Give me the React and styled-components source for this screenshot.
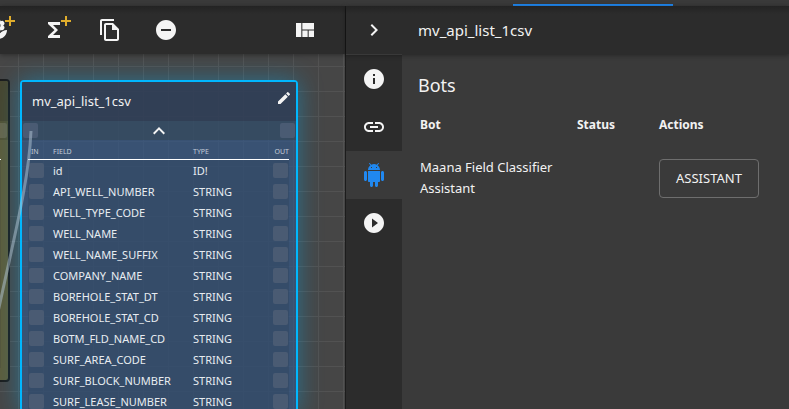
import React from "react";
import styled, { createGlobalStyle } from "styled-components";
import {
  MdInfo,
  MdLink,
  MdPlayCircleFilled,
  MdRemoveCircle,
  MdOutlineFileCopy,
  MdViewQuilt,
  MdChevronRight,
  MdEdit,
  MdExpandLess,
  MdFunctions,
} from "react-icons/md";

const GlobalStyle = createGlobalStyle`
  *, *::before, *::after { box-sizing: border-box; }
  body {
    margin: 0;
    background: #3a3a3a;
    color: #f2f2f2;
    font-family: "Noto Sans", "Open Sans", sans-serif;
    font-size: 14px;
  }
  button, table { font: inherit; color: inherit; }
  button { cursor: pointer; }
`;

const Page = styled.div`
  display: flex;
  flex-direction: column;
  height: 100vh;
  overflow: hidden;
`;

const TabStrip = styled.div`
  display: flex;
  flex: none;
  align-items: flex-end;
  justify-content: flex-end;
  height: 6px;
  padding-right: 116px;
  background: #3a3a3a;
`;

const ActiveTab = styled.div`
  width: 160px;
  height: 2px;
  background: #2088f0;
`;

const Workspace = styled.div`
  display: flex;
  flex: 1;
  min-height: 0;
`;

const Editor = styled.main`
  display: flex;
  flex-direction: column;
  flex: 1;
  min-width: 0;
`;

const Bar = styled.header`
  position: relative;
  z-index: 2;
  display: flex;
  flex: none;
  align-items: center;
  height: 48px;
  background: linear-gradient(#232323, #2c2c2c 8px);
  box-shadow: 0 1px 5px rgba(0, 0, 0, 0.4);
`;

const Toolbar = styled(Bar)`
  justify-content: space-between;
  padding-right: 28px;
`;

const ToolGroup = styled.div`
  display: flex;
  gap: 32px;
  margin-left: -14px;
`;

const IconButton = styled.button`
  position: relative;
  display: flex;
  align-items: center;
  justify-content: center;
  width: 24px;
  height: 24px;
  padding: 0;
  border: 0;
  background: none;
  color: #f4f4f4;
`;

const PlusBadge = styled.svg`
  position: absolute;
  top: -2px;
  right: -5px;
  width: 10px;
  height: 10px;
  stroke: #e0ad2c;
  stroke-width: 2;
`;

const Canvas = styled.section`
  position: relative;
  flex: 1;
  overflow: hidden;
  background-color: #464646;
  background-image:
    linear-gradient(#525252 1px, transparent 1px),
    linear-gradient(90deg, #525252 1px, transparent 1px);
  background-size: 25px 25px;
  background-position: 18px 12px;
`;

const Node = styled.article`
  position: absolute;
  left: 20px;
  top: 26px;
  width: 278px;
  border: 2px solid #00b7ff;
  border-radius: 4px;
  background: rgba(48, 90, 145, 0.6);
  box-shadow: 0 0 24px rgba(0, 183, 255, 0.4);
`;

const NodeHeader = styled.div`
  display: flex;
  justify-content: space-between;
  height: 39px;
  padding: 4px 0 0 10px;
  background: rgba(45, 52, 66, 0.62);
`;

const NodeTitle = styled.h2`
  margin: 0;
  font-size: 13px;
  font-weight: 400;
  line-height: 30px;
`;

const NodePorts = styled.div`
  display: flex;
  align-items: center;
  justify-content: space-between;
  height: 19px;
  padding: 0 1px;
  background: rgba(51, 67, 80, 0.5);
`;

const Port = styled.span`
  display: block;
  width: 15px;
  height: 15px;
  border-radius: 2px;
  background: #4a5b73;
`;

const FieldTable = styled.table`
  width: calc(100% - 13px);
  margin-left: 6px;
  border-collapse: separate;
  border-spacing: 0;
  table-layout: fixed;
  font-size: 11px;
  line-height: 21px;
  text-align: left;

  thead th {
    height: 20px;
    padding: 4px 0 0;
    border-bottom: 1px solid #fff;
    font-size: 7px;
    font-weight: 400;
    line-height: 15px;
    color: #c3ccd8;
  }
  thead th:first-child { padding-left: 3px; }
  tbody { background: rgba(50, 70, 96, 0.5); }
  td {
    height: 21px;
    padding: 0;
    color: #e8ecf1;
  }
  td:first-child { padding-left: 1px; }
  th:last-child { text-align: right; }
  td:last-child { padding-left: 1px; }
`;

const Column = styled.col`
  width: ${(p) => p.$width};
`;

const OliveNode = styled.article`
  position: absolute;
  left: -260px;
  top: 25px;
  width: 270px;
  height: 303px;
  border: 2px solid #1c1c1c;
  border-radius: 4px;
  background: #5c5c3c;
  overflow: hidden;
`;

const OliveHeader = styled.div`
  height: 40px;
  background: #47462f;
`;

const OlivePorts = styled.div`
  display: flex;
  align-items: center;
  justify-content: flex-end;
  height: 19px;
  padding-right: 1px;
  background: #525235;
`;

const OlivePort = styled(Port)`
  background: #66654c;
`;

const OliveRule = styled.div`
  height: 20px;
  margin-right: 7px;
  border-bottom: 1px solid #fff;
`;

const OliveBody = styled.div`
  height: 208px;
  margin-right: 7px;
  background: #55553a;
`;

const Wire = styled.svg`
  position: absolute;
  left: 0;
  top: 0;
  width: 60px;
  height: 355px;
  fill: none;
  stroke: rgba(180, 200, 215, 0.5);
  stroke-width: 3;
`;

const Inspector = styled.aside`
  display: flex;
  flex-direction: column;
  flex: none;
  width: 444px;
  border-left: 1px solid #1c1c1c;
`;

const InspectorBar = styled(Bar)`
  padding-left: 16px;
  gap: 32px;
`;

const InspectorTitle = styled.h1`
  margin: 0;
  font-size: 15px;
  font-weight: 400;
  line-height: 20px;
`;

const InspectorBody = styled.div`
  display: flex;
  flex: 1;
`;

const SideNav = styled.nav`
  width: 56px;
  border-top: 1px solid #4a4a4a;
  background: #2c2c2c;
`;

const NavButton = styled(IconButton)`
  width: 100%;
  height: 48px;
  background: ${(p) => (p.$active ? "#3a3a3a" : "none")};
  color: ${(p) => (p.$active ? "#2088f0" : "#f4f4f4")};
`;

const Panel = styled.section`
  flex: 1;
  padding: 16px;
  background: #3a3a3a;
`;

const PanelTitle = styled.h2`
  margin: 0 0 12px;
  font-size: 18px;
  font-weight: 400;
  line-height: 30px;
`;

const BotTable = styled.table`
  width: 100%;
  border-collapse: collapse;
  table-layout: fixed;
  font-size: 13px;
  line-height: 21px;
  text-align: left;

  th {
    height: 24px;
    padding: 2px;
    font-size: 12px;
    font-weight: 700;
  }
  td {
    padding: 20px 2px 0;
  }
`;

const OutlineButton = styled.button`
  display: block;
  height: 39px;
  padding: 0 16px;
  border: 1px solid #6e6e6e;
  border-radius: 4px;
  background: none;
  font-size: 13px;
`;

const fields = [
  ["id", "ID!"],
  ["API_WELL_NUMBER", "STRING"],
  ["WELL_TYPE_CODE", "STRING"],
  ["WELL_NAME", "STRING"],
  ["WELL_NAME_SUFFIX", "STRING"],
  ["COMPANY_NAME", "STRING"],
  ["BOREHOLE_STAT_DT", "STRING"],
  ["BOREHOLE_STAT_CD", "STRING"],
  ["BOTM_FLD_NAME_CD", "STRING"],
  ["SURF_AREA_CODE", "STRING"],
  ["SURF_BLOCK_NUMBER", "STRING"],
  ["SURF_LEASE_NUMBER", "STRING"],
];

const Plus = () => (
  <PlusBadge viewBox="0 0 10 10" aria-hidden="true">
    <path d="M5 0v10M0 5h10" />
  </PlusBadge>
);

const FlowerIcon = () => (
  <svg width="24" height="24" viewBox="0 0 24 24" fill="currentColor" aria-hidden="true">
    <path d="M3 12c0 5 4 9 9 9 0-5-4-9-9-9zM12 21c5 0 9-4 9-9-5 0-9 4-9 9z" />
    <path
      fillRule="evenodd"
      d="M12 1a2.500 2.500 0 0 1 2.500 2.200A2.500 2.500 0 1 1 17.200 7.500a2.500 2.500 0 1 1-2.700 4.300 2.500 2.500 0 0 1-5 0A2.500 2.500 0 1 1 6.800 7.500 2.500 2.500 0 1 1 9.500 3.200 2.500 2.500 0 0 1 12 1zm0 4a2.500 2.500 0 1 0 0 5 2.500 2.500 0 0 0 0-5z"
    />
  </svg>
);

const AndroidIcon = () => (
  <svg width="24" height="24" viewBox="0 0 24 24" fill="currentColor" aria-hidden="true">
    <path d="M6 18c0 .55.45 1 1 1h1v3.500c0 .83.67 1.500 1.500 1.500s1.500-.67 1.500-1.500V19h2v3.500c0 .83.67 1.500 1.500 1.500s1.500-.67 1.500-1.500V19h1c.55 0 1-.45 1-1V8H6v10zM3.500 8C2.670 8 2 8.670 2 9.500v7c0 .83.67 1.500 1.500 1.500S5 17.330 5 16.500v-7C5 8.670 4.330 8 3.500 8zm17 0c-.83 0-1.500.67-1.500 1.500v7c0 .83.67 1.500 1.500 1.500s1.500-.67 1.500-1.500v-7c0-.83-.67-1.500-1.500-1.500zm-4.970-5.840l1.300-1.300c.2-.2.2-.51 0-.71-.2-.2-.51-.2-.71 0l-1.480 1.480C13.850 1.230 12.950 1 12 1c-.96 0-1.860.23-2.660.63L7.850.15c-.2-.2-.51-.2-.71 0-.2.2-.2.51 0 .71l1.310 1.310C6.970 3.260 6 5.010 6 7h12c0-1.990-.97-3.750-2.470-4.840zM10 5H9V4h1v1zm5 0h-1V4h1v1z" />
  </svg>
);

export default function App() {
  return (
    <Page>
      <GlobalStyle />
      <TabStrip>
        <ActiveTab />
      </TabStrip>
      <Workspace>
        <Editor>
          <Toolbar>
            <ToolGroup>
              <IconButton aria-label="Add knowledge">
                <FlowerIcon />
                <Plus />
              </IconButton>
              <IconButton aria-label="Add function">
                <MdFunctions size={24} />
                <Plus />
              </IconButton>
              <IconButton aria-label="Copy">
                <MdOutlineFileCopy size={24} />
              </IconButton>
              <IconButton aria-label="Remove">
                <MdRemoveCircle size={24} />
              </IconButton>
            </ToolGroup>
            <IconButton aria-label="Layout">
              <MdViewQuilt size={24} />
            </IconButton>
          </Toolbar>
          <Canvas>
            <OliveNode>
              <OliveHeader />
              <OlivePorts>
                <OlivePort />
              </OlivePorts>
              <OliveRule />
              <OliveBody />
            </OliveNode>
            <Node>
              <NodeHeader>
                <NodeTitle>mv_api_list_1csv</NodeTitle>
                <IconButton aria-label="Edit">
                  <MdEdit size={16} />
                </IconButton>
              </NodeHeader>
              <NodePorts>
                <Port />
                <IconButton aria-label="Collapse">
                  <MdExpandLess size={24} />
                </IconButton>
                <Port />
              </NodePorts>
              <FieldTable>
                <colgroup>
                  <Column $width="25px" />
                  <Column $width="140px" />
                  <Column />
                  <Column $width="17px" />
                </colgroup>
                <thead>
                  <tr>
                    <th>IN</th>
                    <th>FIELD</th>
                    <th>TYPE</th>
                    <th>OUT</th>
                  </tr>
                </thead>
                <tbody>
                  {fields.map(([name, type]) => (
                    <tr key={name}>
                      <td>
                        <Port />
                      </td>
                      <td>{name}</td>
                      <td>{type}</td>
                      <td>
                        <Port />
                      </td>
                    </tr>
                  ))}
                </tbody>
              </FieldTable>
            </Node>
            <Wire viewBox="0 0 60 355" aria-hidden="true">
              <path d="M31 77C29 125 16 175 0 249L-4 267" />
            </Wire>
          </Canvas>
        </Editor>
        <Inspector>
          <InspectorBar>
            <IconButton aria-label="Close panel">
              <MdChevronRight size={24} />
            </IconButton>
            <InspectorTitle>mv_api_list_1csv</InspectorTitle>
          </InspectorBar>
          <InspectorBody>
            <SideNav>
              <NavButton aria-label="Info">
                <MdInfo size={24} />
              </NavButton>
              <NavButton aria-label="Links">
                <MdLink size={24} />
              </NavButton>
              <NavButton aria-label="Bots" $active>
                <AndroidIcon />
              </NavButton>
              <NavButton aria-label="Run">
                <MdPlayCircleFilled size={24} />
              </NavButton>
            </SideNav>
            <Panel>
              <PanelTitle>Bots</PanelTitle>
              <BotTable>
                <colgroup>
                  <Column $width="157px" />
                  <Column $width="82px" />
                  <Column />
                </colgroup>
                <thead>
                  <tr>
                    <th>Bot</th>
                    <th>Status</th>
                    <th>Actions</th>
                  </tr>
                </thead>
                <tbody>
                  <tr>
                    <td>Maana Field Classifier Assistant</td>
                    <td />
                    <td>
                      <OutlineButton>ASSISTANT</OutlineButton>
                    </td>
                  </tr>
                </tbody>
              </BotTable>
            </Panel>
          </InspectorBody>
        </Inspector>
      </Workspace>
    </Page>
  );
}
